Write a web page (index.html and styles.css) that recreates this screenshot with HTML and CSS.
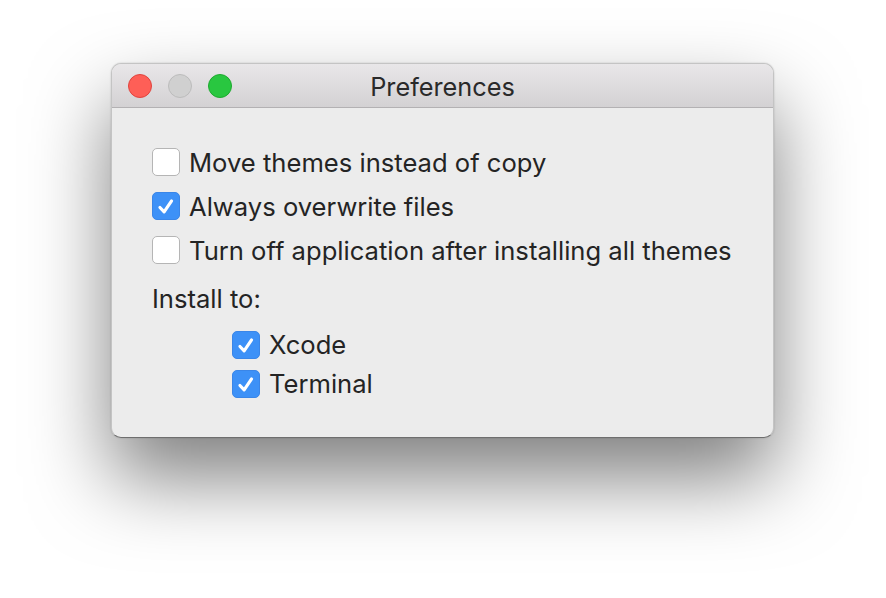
FILE: index.html
```html
<!DOCTYPE html>
<html>
<head>
<meta charset="utf-8">
<link rel="stylesheet" href="styles.css">
</head>
<body>
<div class="window">
  <div class="titlebar">
    <div class="lights">
      <span class="light red"></span>
      <span class="light gray"></span>
      <span class="light green"></span>
    </div>
    <div class="title">Preferences</div>
  </div>
  <div class="content">
    <div class="row">
      <span class="box"></span><span class="label">Move themes instead of copy</span>
    </div>
    <div class="row">
      <span class="box checked"><svg viewBox="0 0 28 28" width="28" height="28"><path d="M7.5 14.5 L12 19.3 L20 7.5" fill="none" stroke="#fff" stroke-width="3.4" stroke-linecap="round" stroke-linejoin="round"/></svg></span><span class="label">Always overwrite files</span>
    </div>
    <div class="row">
      <span class="box"></span><span class="label">Turn off application after installing all themes</span>
    </div>
    <div class="section">Install to:</div>
    <div class="sub">
      <div class="row small">
        <span class="box checked"><svg viewBox="0 0 28 28" width="28" height="28"><path d="M7.5 14.5 L12 19.3 L20 7.5" fill="none" stroke="#fff" stroke-width="3.4" stroke-linecap="round" stroke-linejoin="round"/></svg></span><span class="label">Xcode</span>
      </div>
      <div class="row small">
        <span class="box checked"><svg viewBox="0 0 28 28" width="28" height="28"><path d="M7.5 14.5 L12 19.3 L20 7.5" fill="none" stroke="#fff" stroke-width="3.4" stroke-linecap="round" stroke-linejoin="round"/></svg></span><span class="label">Terminal</span>
      </div>
    </div>
  </div>
</div>
</body>
</html>
```
FILE: styles.css
```css
html, body {
  margin: 0;
  padding: 0;
  background: #ffffff;
}
body {
  width: 886px;
  height: 598px;
  overflow: hidden;
  font-family: Inter, "Open Sans", "Liberation Sans", sans-serif;
  color: #242424;
}
.window {
  margin: 63px 0 0 111px;
  width: 663px;
  height: 375px;
  box-sizing: border-box;
  border-radius: 10px;
  background: #ececec;
  border: 1px solid #c4c4c4;
  border-bottom-color: #6e6e6e;
  box-shadow: 0 40px 80px rgba(0,0,0,0.5), 0 0 2px rgba(0,0,0,0.2);
  overflow: hidden;
}
.titlebar {
  height: 44px;
  box-sizing: border-box;
  background: linear-gradient(#e9e7e9, #d3d1d3);
  border-bottom: 1px solid #b3b1b3;
  display: flex;
  align-items: center;
  position: relative;
}
.lights {
  display: flex;
  gap: 16px;
  padding-left: 16px;
}
.light {
  width: 24px;
  height: 24px;
  border-radius: 50%;
  box-sizing: border-box;
}
.red { background: #fe5f57; border: 1px solid #e0443e; }
.gray { background: #d0d0d0; border: 1px solid #bcbcbc; }
.green { background: #29c740; border: 1px solid #1eaa2f; }
.title {
  position: absolute;
  left: 0;
  right: 0;
  text-align: center;
  font-size: 25.3px;
  color: #2a2a2a;
  top: 7px;
}
.content {
  padding: 32px 0 0 40px;
}
.row {
  display: flex;
  align-items: center;
  height: 44px;
  gap: 9px;
}
.row.small {
  height: 39px;
}
.box {
  width: 28px;
  height: 28px;
  box-sizing: border-box;
  border-radius: 5px;
  background: #ffffff;
  border: 1px solid #b5b5b5;
  display: flex;
}
.box.checked {
  background: #3d91f7;
  border-color: #3a86e8;
}
.label {
  font-size: 25.6px;
}
.section {
  font-size: 25.6px;
  margin-top: 11px;
  height: 42px;
}
.sub {
  padding-left: 80px;
}
```
